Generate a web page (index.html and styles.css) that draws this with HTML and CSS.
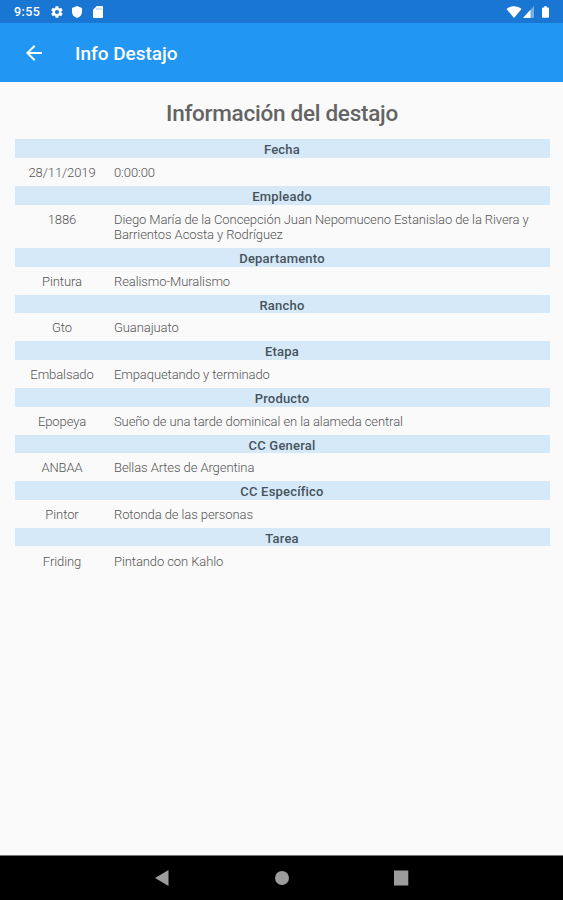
FILE: index.html
```html
<!doctype html>
<html lang="es">
    <head>
        <meta charset="utf-8">
        <title>Info Destajo</title>
        <link rel="stylesheet" href="styles.css">
    </head>
    <body>
        <div class="status-bar">
            <span class="clock">9:55</span>
            <svg class="icon-gear" width="14" height="14" viewBox="0 0 24 24"><path d="M19.4 13a7.5 7.5 0 0 0 0-2l2.1-1.6a.5.5 0 0 0 .1-.6l-2-3.5a.5.5 0 0 0-.6-.2l-2.5 1a7.3 7.3 0 0 0-1.7-1l-.4-2.6a.5.5 0 0 0-.5-.5h-4a.5.5 0 0 0-.5.5L9 5.100a7.3 7.3 0 0 0-1.700 1l-2.5-1a.5.5 0 0 0-.6.2l-2 3.500a.5.5 0 0 0 .1.6L4.500 11a7.5 7.5 0 0 0 0 2l-2.200 1.600a.5.5 0 0 0-.1.6l2 3.500c.1.2.4.3.6.2l2.500-1a7.300 7.300 0 0 0 1.700 1l.4 2.600c0 .3.2.5.5.5h4c.3 0 .5-.2.5-.5l.4-2.600a7.300 7.300 0 0 0 1.700-1l2.500 1c.2.1.5 0 .6-.2l2-3.500a.5.5 0 0 0-.1-.6zM12 15.500a3.500 3.500 0 1 1 0-7 3.500 3.500 0 0 1 0 7z"/></svg>
            <svg class="icon-shield" width="12" height="14" viewBox="0 0 12 14"><path d="M6 1l5 2v4c0 2.800-2 5-5 6C3 12 1 9.800 1 7V3z"/></svg>
            <svg class="icon-card" width="10" height="12" viewBox="0 0 10 12"><path d="M3.800 0H9a1 1 0 0 1 1 1v10a1 1 0 0 1-1 1H1a1 1 0 0 1-1-1V3.800z"/><path class="notch" d="M3.500 2h1v2h-1zM5.500 2h1v2h-1zM7.500 2h1v2h-1z"/></svg>
            <svg class="icon-wifi" width="16" height="12" viewBox="0 0 16 12"><path d="M8 12L.5 3C4.500-.6 11.500-.6 15.500 3z"/></svg>
            <svg class="icon-signal" width="11" height="12" viewBox="0 0 11 12"><path d="M0 12L11 0v12z" opacity=".4"/><path d="M0 12l7.500-8.200V12z"/></svg>
            <svg class="icon-battery" width="7" height="12" viewBox="0 0 8 13"><path d="M2.500 0h3v1.300H7a1 1 0 0 1 1 1V12a1 1 0 0 1-1 1H1a1 1 0 0 1-1-1V2.300a1 1 0 0 1 1-1h1.500z"/></svg>
        </div>
        <header>
            <svg width="24" height="24" viewBox="0 0 24 24"><path d="M20 11H7.830l5.590-5.590L12 4l-8 8 8 8 1.410-1.410L7.830 13H20z"/></svg>
            <span>Info Destajo</span>
        </header>
        <main>
            <h1>Información del destajo</h1>
            <h2>Fecha</h2>
            <div class="row">
                <span class="key">28/11/2019</span>
                <span class="value">0:00:00</span>
            </div>
            <h2>Empleado</h2>
            <div class="row">
                <span class="key">1886</span>
                <span class="value">Diego María de la Concepción Juan Nepomuceno Estanislao de la Rivera y Barrientos Acosta y Rodríguez</span>
            </div>
            <h2>Departamento</h2>
            <div class="row">
                <span class="key">Pintura</span>
                <span class="value">Realismo-Muralismo</span>
            </div>
            <h2>Rancho</h2>
            <div class="row">
                <span class="key">Gto</span>
                <span class="value">Guanajuato</span>
            </div>
            <h2>Etapa</h2>
            <div class="row">
                <span class="key">Embalsado</span>
                <span class="value">Empaquetando y terminado</span>
            </div>
            <h2>Producto</h2>
            <div class="row">
                <span class="key">Epopeya</span>
                <span class="value">Sueño de una tarde dominical en la alameda central</span>
            </div>
            <h2>CC General</h2>
            <div class="row">
                <span class="key">ANBAA</span>
                <span class="value">Bellas Artes de Argentina</span>
            </div>
            <h2>CC Específico</h2>
            <div class="row">
                <span class="key">Pintor</span>
                <span class="value">Rotonda de las personas</span>
            </div>
            <h2>Tarea</h2>
            <div class="row">
                <span class="key">Friding</span>
                <span class="value">Pintando con Kahlo</span>
            </div>
        </main>
        <nav>
            <svg width="16" height="16" viewBox="0 0 16 16"><path d="M1 8l13.500-8v16z"/></svg>
            <svg width="16" height="16" viewBox="0 0 16 16"><circle cx="8" cy="8" r="7"/></svg>
            <svg width="16" height="16" viewBox="0 0 16 16"><path d="M1 .5h14.300v15H1z"/></svg>
        </nav>
    </body>
</html>
```

FILE: styles.css
```css
* {
    box-sizing: border-box;
}

body {
    display: flex;
    flex-direction: column;
    height: 100vh;
    margin: 0;
    font-family: Roboto, "Liberation Sans", sans-serif;
    background-color: #fafafa;
}

svg {
    flex: none;
    fill: #fff;
}

.status-bar {
    display: flex;
    align-items: center;
    height: 23px;
    padding: 0 14px 0 14px;
    background-color: #1976d2;
    color: #fff;
}

.clock {
    width: 36px;
    font-size: 12.5px;
    font-weight: 500;
    letter-spacing: .4px;
}

.icon-shield {
    margin-left: 7px;
}

.icon-card {
    margin-left: 10px;
}

.notch {
    fill: #1976d2;
    opacity: .4;
}

.icon-wifi {
    margin-left: auto;
}

.icon-signal {
    margin-left: 1px;
}

.icon-battery {
    margin-left: 8px;
}

header {
    display: flex;
    align-items: center;
    gap: 29px;
    height: 59px;
    padding: 1px 0 0 22px;
    background-color: #2196f3;
    color: #fff;
    font-size: 19px;
    font-weight: 500;
}

main {
    flex: 1;
    padding: 0 13.5px 0 14.5px;
}

h1 {
    height: 57.3px;
    margin: 0;
    padding-top: 17px;
    font-size: 22.5px;
    font-weight: 500;
    line-height: 28px;
    letter-spacing: -.27px;
    text-align: center;
    color: #646464;
}

h2 {
    height: 18.65px;
    margin: 0;
    font-size: 13px;
    font-weight: 500;
    line-height: 21px;
    letter-spacing: .2px;
    text-align: center;
    color: #46535d;
    background-color: #d5e9f8;
}

.row {
    display: flex;
    padding: 7.1px 0 5.5px;
    font-size: 13px;
    font-weight: 300;
    line-height: 15.4px;
    letter-spacing: -.09px;
    color: #555;
}

.key {
    width: 95px;
    text-align: center;
}

.value {
    flex: 1;
    padding: 0 14px 0 4.5px;
}

nav {
    display: flex;
    justify-content: center;
    align-items: center;
    gap: 103.5px;
    height: 45px;
    border-top: 1px solid #777;
    background-color: #000;
}

nav svg {
    fill: #9c9c9c;
}
```
